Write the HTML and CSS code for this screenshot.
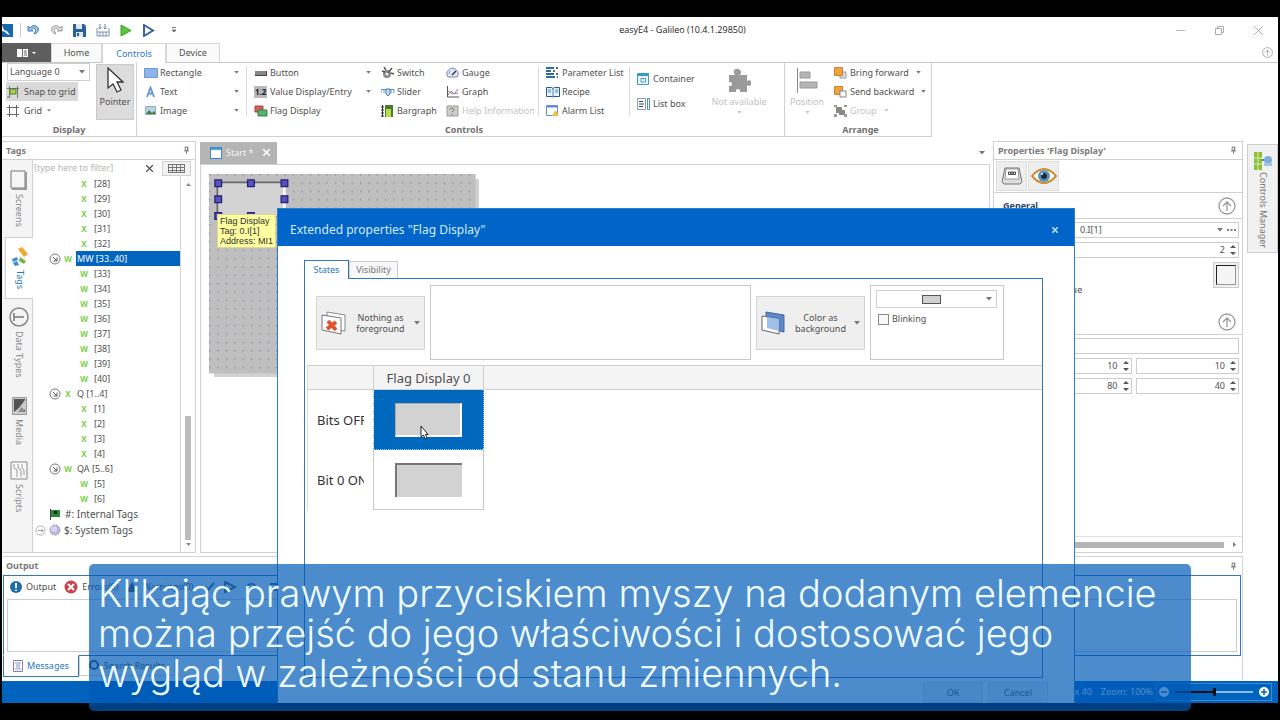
FILE: index.html
```html
<!DOCTYPE html>
<html lang="pl">
<head>
<meta charset="utf-8">
<title>easyE4 - Galileo (10.4.1.29850)</title>
<link rel="stylesheet" href="styles.css">
</head>
<body>
<svg class="defs" aria-hidden="true">
  <symbol id="pin" viewBox="0 0 8 10"><path d="M2.5 1v4h3V1M1 5.500h6M4 5.500V9M2 1h4M5 1v4" fill="none" stroke="#777"/></symbol>
  <symbol id="down" viewBox="0 0 6 4"><path d="M0 0h6L3 3.500z" fill="#777"/></symbol>
  <symbol id="spin" viewBox="0 0 6 12"><path d="M0 4h6L3 1zM0 8h6L3 11z" fill="#555"/></symbol>
  <symbol id="collapse" viewBox="0 0 18 18"><circle cx="9" cy="9" r="8" fill="none" stroke="#999" stroke-width="1.300"/><path d="M9 14V5M5 9l4-4 4 4" fill="none" stroke="#999" stroke-width="1.300"/></symbol>
  <symbol id="open" viewBox="0 0 12 12"><circle cx="6" cy="6" r="5" fill="none" stroke="#777"/><path d="M4 4l4 4M8 4.500V8H4.500" fill="none" stroke="#555"/></symbol>
  <symbol id="square" viewBox="0 0 12 12"><rect x=".5" y=".5" width="11" height="11" fill="#fff" stroke="#3b86cc"/><path d="M1 2h10" stroke="#49a0dd" stroke-width="2"/></symbol>
</svg>

<div class="app">
  <header class="titlebar">
    <div class="quick">
      <svg width="12" height="15" viewBox="0 0 12 15"><path d="M0 1h11v13H0z" fill="#1769ad"/><path d="M0 2l2 5 3 1 3 4-3-1-2-2-3-1z" fill="#fff"/></svg>
      <i class="vline"></i>
      <button aria-label="Undo"><svg width="13" height="12" viewBox="0 0 13 12"><path d="M1 2v5h5L4.500 5.500C7 3 10 5 8 8l-1 2c5-1 6-6 2-8C7 1 4 2 3 4z" fill="#9cc7ec" stroke="#3c7cbb"/></svg></button>
      <button aria-label="Redo"><svg width="13" height="12" viewBox="0 0 13 12"><path d="M12 2v5H7l1.500-1.500C6 3 3 5 5 8l1 2C1 9 0 4 4 2c2-1 5 0 6 2z" fill="#ddd" stroke="#999"/></svg></button>
      <button aria-label="Save"><svg width="13" height="13" viewBox="0 0 13 13"><path d="M0 0h11l2 2v11H0z" fill="#2a6099"/><path d="M3 0h6v5H3zM3 8h7v5H3z" fill="#dbe8f3"/><path d="M4 9h2v3H4z" fill="#2a6099"/></svg></button>
      <button aria-label="Build"><svg width="14" height="13" viewBox="0 0 14 13"><path d="M1 4v8h12V4M1 8h12M4 8v4M7 8v4M10 8v4" fill="none" stroke="#7c94b5"/><path d="M4 0v5M9 0v5M2.500 3.500L4 5l1.500-1.500M7.500 3.500L9 5l1.500-1.500" fill="none" stroke="#6684ac"/></svg></button>
      <button aria-label="Run"><svg width="12" height="13" viewBox="0 0 12 13"><path d="M1 1l10 5.500L1 12z" fill="#5cc43a" stroke="#43a32a"/></svg></button>
      <button aria-label="Simulate"><svg width="13" height="13" viewBox="0 0 13 13"><path d="M2 1l9 5.500L2 12z" fill="#fff" stroke="#3a62a3" stroke-width="2"/></svg></button>
      <button aria-label="More" class="more"><svg width="6" height="6" viewBox="0 0 6 6"><path d="M1 .5h4M1 3h4L3 5z" stroke="#777" fill="#777"/></svg></button>
    </div>
    <h1>easyE4 - Galileo (10.4.1.29850)</h1>
    <div class="winbtns">
      <button aria-label="Minimize"><svg width="9" height="9"><path d="M0 4.500h9" stroke="#bbb"/></svg></button>
      <button aria-label="Restore"><svg width="9" height="9"><path d="M.5 2.500h6v6h-6zM2.500 2.500v-2h6v6h-2" fill="none" stroke="#aaa"/></svg></button>
      <button aria-label="Close"><svg width="9" height="9"><path d="M0 0l9 9M9 0L0 9" stroke="#aaa"/></svg></button>
    </div>
  </header>

  <nav class="tabs">
    <button class="filetab" aria-label="File"><svg width="20" height="10" viewBox="0 0 20 10"><path d="M0 1h11v8H0z" fill="#fff"/><path d="M5.500 1v8M7 3h3M7 5h3M7 7h3" stroke="#666"/><path d="M15 4h4l-2 2z" fill="#fff"/></svg></button>
    <button class="t1">Home</button>
    <button class="t2 on">Controls</button>
    <button class="t3">Device</button>
    <button class="fold" aria-label="Collapse ribbon"><svg width="11" height="11"><use href="#collapse"/></svg></button>
  </nav>

  <section class="ribbon">
    <div class="group g-display">
      <div class="gbody">
        <div class="col c0">
          <div class="selbox"><select aria-label="Language"><option>Language 0</option></select><svg width="6" height="4"><use href="#down"/></svg></div>
          <button class="cmd pressed"><svg width="12" height="12" viewBox="0 0 12 12"><path d="M0 2.500h12M2.500 0v12M10.500 0v12M0 11h3" stroke="#777"/><path d="M3 3h6v5H3z" fill="#a8cf53" stroke="#567f2a"/></svg><span>Snap to grid</span></button>
          <button class="cmd"><svg width="12" height="12" viewBox="0 0 12 12"><path d="M0 2.500h12M0 9.500h12M2.500 0v12M9.500 0v12" stroke="#666"/></svg><span class="tight">Grid</span><svg class="dd" width="4" height="3"><use href="#down"/></svg></button>
        </div>
        <button class="pointer"><svg width="18" height="27" viewBox="0 0 18 27"><path d="M2 1v20l5-4 4 8 4-2-4-8h6z" fill="#fff" stroke="#333" stroke-width="1.300"/></svg>Pointer</button>
      </div>
      <h2>Display</h2>
    </div>
    <div class="group g-controls">
      <div class="gbody">
        <div class="col c1">
          <button class="cmd"><svg width="14" height="12" viewBox="0 0 14 12"><path d="M.5 1.500h13v9H.5z" fill="#8fb5e8" stroke="#6b98d5"/></svg><span>Rectangle</span><svg class="dd" width="5" height="3"><use href="#down"/></svg></button>
          <button class="cmd"><svg width="14" height="12" viewBox="0 0 14 12"><path d="M3 11L6.500 1.500 10 11M4 7.500h5" fill="none" stroke="#6798cf" stroke-width="1.800"/></svg><span>Text</span><svg class="dd" width="5" height="3"><use href="#down"/></svg></button>
          <button class="cmd"><svg width="14" height="12" viewBox="0 0 14 12"><path d="M1.500 1.500h10v8h-10z" fill="#b5d5ea" stroke="#9aa"/><path d="M2 9l3-4 3 3 2-2 2 3z" fill="#4a7a42"/></svg><span>Image</span><svg class="dd" width="5" height="3"><use href="#down"/></svg></button>
        </div>
        <i class="sep"></i>
        <div class="col c2">
          <button class="cmd"><svg width="14" height="12" viewBox="0 0 14 12"><path d="M1 4h11v5H1z" fill="#888"/><path d="M1 8.500h11M12.500 4v5" stroke="#444"/></svg><span>Button</span><svg class="dd" width="5" height="3"><use href="#down"/></svg></button>
          <button class="cmd"><svg width="14" height="12" viewBox="0 0 14 12"><path d="M0 0h13v12H0z" fill="#b8b8b8"/><text x="1" y="9" class="digits">1.2</text></svg><span>Value Display/Entry</span><svg class="dd" width="5" height="3"><use href="#down"/></svg></button>
          <button class="cmd"><svg width="14" height="12" viewBox="0 0 14 12"><path d="M1 1h8v6H1z" fill="#d3605a" stroke="#a44"/><path d="M4 5h9v6H4z" fill="#55b46b" stroke="#37824a"/></svg><span>Flag Display</span></button>
        </div>
        <div class="col c3">
          <button class="cmd"><svg width="14" height="12" viewBox="0 0 14 12"><circle cx="6" cy="7" r="4" fill="#888"/><path d="M6 7l5-6M1 4l3 1M3 0l2 3M10 6l3 1" stroke="#555" stroke-width="1.500"/><circle cx="6" cy="7" r="1.500" fill="#eee"/></svg><span>Switch</span></button>
          <button class="cmd"><svg width="14" height="12" viewBox="0 0 14 12"><path d="M0 3.500h13M0 3v4M3 3v4M10 3v4M13 3v4" stroke="#5d92c9" fill="none"/><path d="M5 3h4v5L7 10 5 8z" fill="#c4dbf1" stroke="#4b7fb7"/></svg><span>Slider</span></button>
          <button class="cmd"><svg width="14" height="12" viewBox="0 0 14 12"><path d="M1.500 0v12M0 2h3M0 5h3M0 8h3M0 11h3" stroke="#333"/><path d="M4 0h8v12H4z" fill="#477a36"/><path d="M5 4h5v8H5z" fill="#bddd3f"/></svg><span>Bargraph</span></button>
        </div>
        <div class="col c4">
          <button class="cmd"><svg width="14" height="12" viewBox="0 0 14 12"><path d="M2 10a5.500 5.500 0 1 1 9 0z" fill="#e3e7f4" stroke="#7582b1"/><path d="M6 8l4-4" stroke="#334" stroke-width="1.500"/><path d="M3 7l1-3" stroke="#779bd5"/></svg><span>Gauge</span></button>
          <button class="cmd"><svg width="14" height="12" viewBox="0 0 14 12"><path d="M1.500 0v11H13" fill="none" stroke="#556"/><path d="M2 9l3-4 3 3 4-5" fill="none" stroke="#d0607f"/><path d="M2 5l4 3 6-1" fill="none" stroke="#7c8fc5"/></svg><span>Graph</span></button>
          <button class="cmd" disabled><svg width="14" height="12" viewBox="0 0 14 12"><path d="M1 1h11v10H1z" fill="#ccc" stroke="#999"/><path d="M4 5c0-3 5-2 4 0L6 7M6 8.500V10" fill="none" stroke="#777"/></svg><span>Help Information</span></button>
        </div>
        <i class="sep"></i>
        <div class="col c5">
          <button class="cmd"><svg width="14" height="12" viewBox="0 0 14 12"><path d="M0 1h8M0 4h5M0 7h8M0 10h9" stroke="#2d6ca1" stroke-width="2"/><path d="M10 1h2M7 4h2M10 7h2M11 10h1" stroke="#333" stroke-width="1.500"/></svg><span>Parameter List</span></button>
          <button class="cmd"><svg width="14" height="12" viewBox="0 0 14 12"><path d="M.5 1.500h5l1.500 1 1.500-1h5v9H8L7 11l-1-.5H.5z" fill="#e6f1fa" stroke="#25598e"/><path d="M7 2v8M2 4h3M2 6h3M9 4h3M9 6h3" stroke="#4d86bc"/></svg><span>Recipe</span></button>
          <button class="cmd"><svg width="14" height="12" viewBox="0 0 14 12"><path d="M.5.5h11v10H.5z" fill="#fff" stroke="#5d93ca"/><path d="M1 1.500h10" stroke="#5d93ca" stroke-width="2"/><path d="M6 11c2-1 1-5 3.500-5s2 4 3.500 5z" fill="#f0bd45"/></svg><span>Alarm List</span></button>
        </div>
        <i class="sep"></i>
        <div class="col c6">
          <button class="cmd"><svg width="14" height="12" viewBox="0 0 14 12"><path d="M.5.500h11v11H.5z" fill="#eaf5fb" stroke="#3c9ac8"/><path d="M1 2h10" stroke="#3c9ac8" stroke-width="2"/><path d="M4 5.500h4.500v3.500H4z" fill="#fff" stroke="#3c9ac8"/></svg><span>Container</span></button>
          <button class="cmd"><svg width="14" height="12" viewBox="0 0 14 12"><path d="M.5.500h8v11h-8z" fill="#fff" stroke="#8a9db0"/><path d="M2 3.500h4M2 6h5M2 8.500h4" stroke="#345"/><path d="M10.500.500h2v11h-2z" fill="#fff" stroke="#4d90cc"/></svg><span>List box</span></button>
        </div>
        <button class="big na" disabled><svg width="24" height="26" viewBox="0 0 24 26"><path d="M2 8h6C5 4 8 1 11 2s4 3 2 6h7v6c3-2 5 0 4 3s-3 2-4 1v7h-7c1-4-5-4-4 0H2v-6c4 1 4-5 0-4z" fill="#9a9a9a"/></svg>Not available<svg width="5" height="3" opacity=".4"><use href="#down"/></svg></button>
      </div>
      <h2>Controls</h2>
    </div>
    <div class="group g-arrange">
      <div class="gbody">
        <button class="big pos" disabled><svg width="22" height="26" viewBox="0 0 22 26"><path d="M1.500 1v25" stroke="#888"/><path d="M4 5h10v6H4zM4 15h17v6H4z" fill="#b5b5b5" stroke="#999"/></svg>Position<svg width="5" height="3" opacity=".4"><use href="#down"/></svg></button>
        <div class="col c7">
          <button class="cmd"><svg width="14" height="12" viewBox="0 0 14 12"><path d="M6 5h6v6H6z" fill="#ddd" stroke="#999"/><path d="M.5.500h8v8h-8z" fill="#f0a23d" stroke="#cc8131"/></svg><span class="mid">Bring forward</span><svg width="5" height="3"><use href="#down"/></svg></button>
          <button class="cmd"><svg width="14" height="12" viewBox="0 0 14 12"><path d="M.5.500h8v8h-8z" fill="#f0a23d" stroke="#cc8131"/><path d="M6 5h6v6H6z" fill="#fff" stroke="#789"/></svg><span class="mid">Send backward</span><svg width="5" height="3"><use href="#down"/></svg></button>
          <button class="cmd" disabled><svg width="14" height="12" viewBox="0 0 14 12"><path d="M2 2h6v6H2zM5 5h6v5H5z" fill="#888"/><path d="M0 0h3v2H0zM10 0h3v2h-3zM0 9h3v3H0zM10 9h3v3h-3z" fill="#999"/></svg><span class="tight">Group</span><svg width="5" height="3" opacity=".4"><use href="#down"/></svg></button>
        </div>
      </div>
      <h2>Arrange</h2>
    </div>
  </section>

  <main class="work">
    <aside class="tagspanel">
      <div class="phead"><span>Tags</span><svg width="7" height="9"><use href="#pin"/></svg></div>
      <div class="tagsbody">
        <nav class="side">
          <button class="s1"><svg width="18" height="20" viewBox="0 0 18 20"><path d="M1 1h14v17H1z" fill="#f6f6f6" stroke="#777"/><path d="M16 2v17H2" fill="none" stroke="#999" stroke-width="2"/></svg><span>Screens</span></button>
          <button class="s2 on"><svg width="18" height="20" viewBox="0 0 18 20"><path d="M7 3l4-2 6 7-4 3z" fill="#f2a72f"/><path d="M9 11l6 4-2 3-5-3z" fill="#6ebb4b"/><path d="M1 13l5-2 1 3-5 2z" fill="#3e8fcf"/><path d="M2 17l4-2 2 4-4 1z" fill="#3e8fcf"/></svg><span>Tags</span></button>
          <button class="s3"><svg width="20" height="20" viewBox="0 0 20 20"><circle cx="10" cy="10" r="9" fill="none" stroke="#888" stroke-width="1.500"/><path d="M5 6v8M5 10h10" stroke="#777" stroke-width="1.500"/></svg><span>Data Types</span></button>
          <button class="s4"><svg width="15" height="18" viewBox="0 0 15 18"><path d="M.5.500h14v17H.5z" fill="#ccc" stroke="#999"/><path d="M2 2h11v13H2z" fill="#555"/><path d="M2 15l5-4 6-8v9l-3 3z" fill="#ccc"/><path d="M6 15l4-5 3 5z" fill="#888"/></svg><span>Media</span></button>
          <button class="s5"><svg width="18" height="19" viewBox="0 0 18 19"><path d="M1 1h16v17H1z" fill="#f8f8f8" stroke="#888"/><path d="M4 3v4l3 2v7M8 3v4l3 2v7M12 3v4l2 2v5" fill="none" stroke="#999"/></svg><span>Scripts</span></button>
        </nav>
        <div class="treewrap">
          <div class="filter"><input type="text" aria-label="Filter" placeholder="[type here to filter]"><button aria-label="Clear"><svg width="7" height="7"><path d="M0 0l7 7M7 0L0 7" stroke="#555" stroke-width="1.300"/></svg></button><button class="gridbtn" aria-label="Columns"><svg width="17" height="9"><path d="M0 .5h17M0 3.500h17M0 6.500h17M0 8.500h17M.5 0v9M4.500 0v9M8.500 0v9M12.500 0v9M16.500 0v9" stroke="#777"/></svg></button></div>
          <div class="treearea">
            <ul class="tree">
              <li class="leaf"><b>X</b>[28]</li>
              <li class="leaf"><b>X</b>[29]</li>
              <li class="leaf"><b>X</b>[30]</li>
              <li class="leaf"><b>X</b>[31]</li>
              <li class="leaf"><b>X</b>[32]</li>
              <li class="node sel"><svg width="12" height="12"><use href="#open"/></svg><b>W</b><span>MW [33..40]</span></li>
              <li class="leaf"><b>W</b>[33]</li>
              <li class="leaf"><b>W</b>[34]</li>
              <li class="leaf"><b>W</b>[35]</li>
              <li class="leaf"><b>W</b>[36]</li>
              <li class="leaf"><b>W</b>[37]</li>
              <li class="leaf"><b>W</b>[38]</li>
              <li class="leaf"><b>W</b>[39]</li>
              <li class="leaf"><b>W</b>[40]</li>
              <li class="node"><svg width="12" height="12"><use href="#open"/></svg><b>X</b><span>Q [1..4]</span></li>
              <li class="leaf"><b>X</b>[1]</li>
              <li class="leaf"><b>X</b>[2]</li>
              <li class="leaf"><b>X</b>[3]</li>
              <li class="leaf"><b>X</b>[4]</li>
              <li class="node"><svg width="12" height="12"><use href="#open"/></svg><b>W</b><span>QA [5..6]</span></li>
              <li class="leaf"><b>W</b>[5]</li>
              <li class="leaf"><b>W</b>[6]</li>
              <li class="root int"><svg width="12" height="11" viewBox="0 0 12 11"><path d="M1.500 0v11" stroke="#444"/><path d="M2 1h9v7H2z" fill="#268a35"/><path d="M5 2h3v3H5z" fill="#123"/></svg>#: Internal Tags</li>
              <li class="root sys"><svg width="11" height="11" viewBox="0 0 12 12"><circle cx="6" cy="6" r="5" fill="none" stroke="#aaa"/><path d="M3 6h6M7 4l2 2-2 2" fill="none" stroke="#999"/></svg><svg width="12" height="12" viewBox="0 0 12 12"><circle cx="6" cy="6" r="5" fill="#b9b8d8" stroke="#8e8bb0" stroke-dasharray="2 1"/><circle cx="5" cy="5" r="3" fill="#d6d5ea"/></svg>$: System Tags</li>
            </ul>
            <div class="vscroll"><svg width="5" height="3"><path d="M0 3h5L2.500 0z" fill="#888"/></svg><i></i><svg width="5" height="3"><path d="M0 0h5L2.500 3z" fill="#888"/></svg></div>
          </div>
        </div>
      </div>
    </aside>

    <section class="editor">
      <div class="doctabs"><button class="doctab"><svg width="12" height="12"><use href="#square"/></svg><span>Start *</span><svg width="7" height="7"><path d="M0 0l7 7M7 0L0 7" stroke="#fff" stroke-width="1.500"/></svg></button><svg class="ddoc" width="6" height="4"><use href="#down"/></svg></div>
      <div class="surface">
        <svg class="screen" width="270" height="203" viewBox="0 0 322 242">
          <defs><pattern id="dots" width="10" height="10" patternUnits="userSpaceOnUse"><rect x="0" y="0" width="1.500" height="1.500" fill="#8080a0"/></pattern></defs>
          <path d="M6 6h316v236H6z" fill="#d2d2d2"/>
          <path d="M0 0h318v238H0z" fill="#bfbfc0"/><path d="M0 0h318v238H0z" fill="url(#dots)"/>
          <path d="M10 10h80v40H10z" fill="#d3d3d3"/><path d="M10 50V10h80" fill="none" stroke="#666" stroke-width="2"/><path d="M90 10v40" stroke="#fff" stroke-width="3"/>
          <path d="M7 7h8v8H7zM46 7h8v8h-8zM86 7h8v8h-8zM7 26h8v8H7zM86 26h8v8h-8zM7 46h8v8H7zM46 46h8v8h-8z" fill="#5b51b8" stroke="#22207a" stroke-width="1.500"/>
        </svg>
        <div class="tip">Flag Display<br>Tag: 0.I[1]<br>Address: MI1</div>
      </div>
    </section>

    <aside class="props">
      <div class="phead"><span>Properties 'Flag Display'</span><svg width="7" height="9"><use href="#pin"/></svg></div>
      <div class="ptools">
        <button aria-label="General"><svg width="22" height="18" viewBox="0 0 22 18"><path d="M4 1h14l3 14-2 2H3l-2-2z" fill="#ddd" stroke="#777"/><path d="M5 2h12l1 10H4z" fill="#fff" stroke="#999"/><path d="M7.500 5h2v2.500h-2zM10 5h2v2.500h-2zM12.500 5h2v2.500h-2z" fill="none" stroke="#444"/></svg></button>
        <button aria-label="Appearance"><svg width="26" height="18" viewBox="0 0 26 18"><path d="M1 9Q13-5 25 9 13 23 1 9z" fill="#fff" stroke="#c98f35" stroke-width="2"/><circle cx="13" cy="9" r="6" fill="#5d92b5"/><circle cx="13" cy="9" r="3" fill="#162b3c"/><circle cx="11" cy="7" r="1" fill="#fff"/></svg></button>
      </div>
      <div class="psec"><h3>General</h3><svg width="18" height="18"><use href="#collapse"/></svg></div>
      <div class="pform">
        <div class="field tag"><input aria-label="Tag" value="0.I[1]"><svg width="6" height="4"><use href="#down"/></svg><svg width="9" height="2"><path d="M0 1h2M3.500 1h2M7 1h2" stroke="#555" stroke-width="1.500"/></svg></div>
        <div class="field num"><input aria-label="Count" value="2"><svg width="6" height="12"><use href="#spin"/></svg></div>
        <div class="prow"><span class="plabel">Value</span><button class="look" aria-label="Style"><i></i></button></div>
      </div>
      <div class="psec"><h3>Layout</h3><svg width="18" height="18"><use href="#collapse"/></svg></div>
      <div class="pform">
        <div class="field"><input aria-label="Name"></div>
        <div class="pair"><div class="field num"><input aria-label="X" value="10"><svg width="6" height="12"><use href="#spin"/></svg></div><div class="field num"><input aria-label="Y" value="10"><svg width="6" height="12"><use href="#spin"/></svg></div></div>
        <div class="pair"><div class="field num"><input aria-label="Width" value="80"><svg width="6" height="12"><use href="#spin"/></svg></div><div class="field num"><input aria-label="Height" value="40"><svg width="6" height="12"><use href="#spin"/></svg></div></div>
      </div>
      <div class="hscroll"><i></i><svg width="3" height="5"><path d="M0 0v5l3-2.500z" fill="#777"/></svg></div>
    </aside>

    <nav class="rightstrip"><button><svg width="18" height="20" viewBox="0 0 18 20"><path d="M0 1h8v18H0z" fill="#8bbf3c"/><path d="M4 1v18M0 7h8M0 13h8" stroke="#dcebbf"/><path d="M8 9h3" stroke="#777" stroke-width="2"/><circle cx="14" cy="9" r="4" fill="#7faedb"/><path d="M10 12h8v3h-8z" fill="#a8c5e2"/></svg><span>Controls Manager</span></button></nav>
  </main>

  <section class="output">
    <div class="phead"><span>Output</span><svg width="7" height="9"><use href="#pin"/></svg></div>
    <div class="outbox">
      <div class="outtools">
        <button><svg width="12" height="12" viewBox="0 0 12 12"><circle cx="6" cy="6" r="6" fill="#1b6fae"/><path d="M6 2v5M6 8.500V10" stroke="#fff" stroke-width="2"/></svg>Output</button>
        <button><svg width="14" height="14" viewBox="0 0 14 14"><circle cx="7" cy="7" r="6.500" fill="#c8414b"/><path d="M4 4l6 6M10 4l-6 6" stroke="#fff" stroke-width="2"/></svg>Errors(0)</button>
        <button><svg width="12" height="12" viewBox="0 0 12 12"><path d="M6 1l6 10H0z" fill="#555"/></svg>Warnings(0)</button>
        <svg width="80" height="12" viewBox="0 0 80 12"><path d="M4 6l3 3 6-7M24 1l10 5-10 5zM46 9c0-8 8-8 9-1M69 3h9M69 9h9" fill="none" stroke="#467" stroke-width="2"/></svg>
      </div>
      <textarea aria-label="Messages"></textarea>
    </div>
    <div class="outtabs"><button class="on"><svg width="10" height="12" viewBox="0 0 10 12"><path d="M.5.500h9v11h-9z" fill="#fff" stroke="#7d82bd"/><path d="M2 3h6M3 5h4M3 7h4M2 9h6" stroke="#8d91c6"/></svg>Messages</button><button><svg width="11" height="11" viewBox="0 0 11 11"><circle cx="5" cy="5" r="4" fill="none" stroke="#444" stroke-width="2"/></svg>Search Results</button></div>
  </section>

  <footer class="status"><span>80 x 40</span><label for="zoom">Zoom: 100%</label><div class="zoombox"><button aria-label="Zoom out"><svg width="10" height="10"><circle cx="5" cy="5" r="5" fill="#fff"/><path d="M2 5h6" stroke="#0063be" stroke-width="1.500"/></svg></button><input id="zoom" type="range" min="0" max="100" value="50"><button aria-label="Zoom in"><svg width="10" height="10"><circle cx="5" cy="5" r="5" fill="#fff"/><path d="M2 5h6M5 2v6" stroke="#0063be" stroke-width="1.500"/></svg></button></div></footer>
</div>

<div class="dialog" role="dialog" aria-label="Extended properties">
  <div class="dhead"><h2>Extended properties "Flag Display"</h2><button aria-label="Close"><svg width="6" height="6"><path d="M0 0l6 6M6 0L0 6" stroke="#bfe2ff" stroke-width="1.500"/></svg></button></div>
  <div class="dbody">
    <div class="dtabs"><button class="on">States</button><button>Visibility</button></div>
    <div class="dpanel">
      <div class="dtools">
        <button class="kind"><svg width="26" height="24" viewBox="0 0 26 24"><path d="M6 1l18 3v16l-18-3z" fill="#fff" stroke="#888"/><path d="M1 4l19 3v16L1 19z" fill="#fff" stroke="#777"/><path d="M7 10l8 9M15 11l-9 7" stroke="#e0512f" stroke-width="4"/></svg><span>Nothing as foreground</span><svg width="6" height="4"><use href="#down"/></svg></button>
        <div class="blank"></div>
        <button class="kind"><svg width="26" height="24" viewBox="0 0 26 24"><path d="M5 1l18 3v17L5 17z" fill="#5b88c9" stroke="#46699e"/><path d="M1 5l17 3v15L1 19z" fill="#fff" stroke="#667"/><path d="M6 6l12 2v12L6 17z" fill="#9dbfe9"/></svg><span>Color as background</span><svg width="6" height="4"><use href="#down"/></svg></button>
        <div class="colorbox"><div class="selbox"><select aria-label="Color"><option></option></select><i class="swatch"></i><svg width="6" height="4"><use href="#down"/></svg></div><label><input type="checkbox">Blinking</label></div>
      </div>
      <table class="states">
        <thead><tr><th class="rowh"></th><th class="flag">Flag Display 0</th><th></th></tr></thead>
        <tbody>
          <tr><th class="rowh"><div>Bits OFF</div></th><td class="cell on"><i></i></td><td></td></tr>
          <tr><th class="rowh"><div>Bit 0 ON</div></th><td class="cell"><i></i></td><td></td></tr>
        </tbody>
      </table>
    </div>
    <div class="dfoot"><button>OK</button><button>Cancel</button></div>
  </div>
  <svg class="cursor" width="9" height="15" viewBox="0 0 9 15"><path d="M1 1v11l2.500-2L5 14l2-1-1.500-3.500H8z" fill="#fff" stroke="#222"/></svg>
</div>

<p class="caption">Klikając prawym przyciskiem myszy na dodanym elemencie można przejść do jego właściwości i dostosować jego wygląd w zależności od stanu zmiennych.</p>
</body>
</html>
```
FILE: styles.css
```css
* { box-sizing: border-box; }
body { margin: 0; padding: 17px 2px; min-height: 100vh; position: relative; display: flex; flex-direction: column; background: #000; color: #505050; font: 9px/12px "Noto Sans", "Open Sans", sans-serif; overflow-x: hidden; }
button, input, select, textarea { font: inherit; color: inherit; margin: 0; padding: 0; border: 0; background: none; border-radius: 0; }
select { appearance: none; }
button { white-space: nowrap; }
h1, h2, h3, p, ul { margin: 0; padding: 0; font-weight: normal; }
svg { flex: none; display: block; }
.defs { position: absolute; width: 0; height: 0; }
.app { flex: 1; display: flex; flex-direction: column; background: #fff; min-width: 0; }

.titlebar { display: grid; grid-template-columns: auto 1fr auto; align-items: center; height: 26px; padding-right: 15px; }
.titlebar h1 { font-family: "Open Sans", sans-serif; font-size: 9px; color: #222; text-align: center; padding-left: 12px; }
.quick { display: flex; align-items: center; gap: 10px; }
.quick .vline { width: 1px; height: 14px; background: #ccc; margin: 0 -4px 0 -4px; }
.quick .more { margin-left: 6px; }
.winbtns { display: flex; justify-content: flex-end; gap: 30px; }

.tabs { display: flex; height: 20px; border-bottom: 1px solid #c8c8c8; padding-right: 5px; }
.tabs button { height: 19px; }
.tabs .filetab { width: 49px; background: #5e5e5e; display: grid; place-items: center; }
.t1, .t2, .t3 { border: 1px solid #d6d6d6; border-bottom: 0; background: #fafafa; }
.tabs .t1 { width: 51px; }
.tabs .t2 { width: 64px; height: 20px; background: #fff; color: #2a79c4; }
.tabs .t3 { width: 54px; }
.tabs .fold { margin-left: auto; }

.ribbon { display: flex; }
.group { border: 1px solid #d0d0d0; border-width: 0 1px 1px 0; height: 74px; display: flex; flex-direction: column; justify-content: space-between; }
.group h2 { text-align: center; font-size: 9px; font-weight: bold; color: #707070; line-height: 12px; }
.gbody { display: flex; height: 58px; }
.g-display { width: 135px; }
.g-controls { width: 648px; padding-left: 7px; }
.g-arrange { width: 147px; padding-left: 5px; }
.col { display: flex; flex-direction: column; flex: none; }
.cmd { display: flex; align-items: center; height: 19px; gap: 2px; text-align: left; }
.cmd span { flex: 1; }
.cmd span.tight, .cmd span.mid { flex: none; margin-right: 5px; }
.cmd:disabled, .big:disabled { color: #c2c2c2; }
.col.c0 { width: 88px; padding-left: 5px; }
.col.c0 .cmd { gap: 5px; }
.col.c0 .cmd.pressed { width: 72px; background: #dadada; margin-left: -1px; padding-left: 1px; }
.col.c0 .tight { margin: 0; }
.selbox { position: relative; border: 1px solid #cfcfcf; background: #fff; display: flex; align-items: center; height: 18px; margin-bottom: 1px; }
.selbox select { width: 100%; height: 100%; padding-left: 2px; }
.selbox svg { position: absolute; right: 4px; pointer-events: none; }
.pointer { margin: 1px 0 0 6px; width: 38px; height: 56px; background: #dcdcdc; border: 1px solid #cacaca; display: flex; flex-direction: column; align-items: center; gap: 2px; padding-top: 2px; }
.sep { width: 1px; height: 50px; margin-top: 3px; background: #dcdcdc; }
.c1 { width: 95px; margin-right: 7px; }
.c2 { width: 117px; margin: 0 10px 0 7px; }
.c3 { width: 65px; }
.c4 { width: 92px; }
.c5 { width: 90px; padding-left: 7px; }
.c6 { width: 73px; padding: 6px 0 0 7px; gap: 6px; }
.big { display: flex; flex-direction: column; align-items: center; gap: 3px; height: 54px; padding-top: 4px; }
.na { width: 72px; }
.pos { width: 34px; margin-right: 10px; }
.digits { font: bold 8px "Noto Sans", sans-serif; fill: #222; }

.work { display: flex; flex: 1; padding-top: 4px; min-height: 410px; }
.phead { display: flex; justify-content: space-between; align-items: center; height: 18px; padding: 0 5px 0 4px; font-weight: bold; color: #7a7a7a; border-bottom: 1px solid #d0d0d0; }
.tagspanel { width: 194px; margin-right: 4px; border: 1px solid #d0d0d0; border-left: 0; display: flex; flex-direction: column; }
.tagsbody { display: flex; flex: 1; }
.side { width: 31px; background: #f4f4f4; border-right: 1px solid #d0d0d0; display: flex; flex-direction: column; }
.side button { display: flex; flex-direction: column; align-items: center; gap: 4px; margin-left: 3px; width: 28px; padding-top: 10px; color: #888; }
.side span, .rightstrip span { writing-mode: vertical-rl; }
.side .s1 { height: 77px; }
.side .s2 { height: 62px; background: #fff; border: 1px solid #d0d0d0; border-right: 0; color: #2577bd; padding-top: 8px; }
.side .s3 { height: 88px; padding-top: 8px; }
.side .s4 { height: 64px; }
.treewrap { flex: 1; display: flex; flex-direction: column; min-width: 0; }
.filter { display: flex; align-items: center; height: 16px; }
.filter input { width: 113px; padding-left: 1px; }
.filter input::placeholder { color: #b5b5b5; }
.filter .gridbtn { margin-left: 9px; border: 1px solid #d0d0d0; background: #f2f2f2; width: 29px; height: 15px; display: grid; place-items: center; }
.treearea { display: flex; flex: 1; }
.tree { flex: 1; list-style: none; border-right: 1px solid #d5d5d5; }
.tree li { display: flex; align-items: center; height: 15px; }
.tree b { color: #79cf47; width: 14px; text-align: center; font-size: 8px; }
.leaf { padding-left: 44px; gap: 3px; }
.node { padding-left: 16px; }
.node b { margin: 0 1px 0 0; }
.node span { flex: 1; line-height: 15px; padding-left: 1px; }
.node.sel span { background: #0066bd; color: #fff; }
.tree .root { height: 16px; font-size: 10px; }
.root.int { padding-left: 16px; gap: 4px; }
.root.sys { padding-left: 2px; gap: 3px; }
.vscroll { width: 14px; display: flex; flex-direction: column; align-items: center; justify-content: space-between; padding: 7px 0 6px; }
.vscroll i { width: 6px; height: 124px; background: #bcbcbc; margin: 226px 0 0; }

.editor { flex: 1; display: flex; flex-direction: column; min-width: 0; }
.doctabs { display: flex; align-items: center; height: 23px; padding-right: 5px; }
.doctab { width: 77px; height: 22px; background: #b5b5b5; color: #f4f4f4; display: flex; align-items: center; gap: 4px; padding: 0 7px 0 10px; }
.doctab span { flex: 1; text-align: left; }
.ddoc { margin-left: auto; }
.surface { flex: 1; position: relative; border: 1px solid #d0d0d0; padding: 9px 8px; }
.tip { position: absolute; left: 16px; top: 49px; padding: 1px 2px; background: #ffffa0; color: #333; font: 9px/10px "Liberation Sans", sans-serif; border: 1px solid #d8d89a; white-space: nowrap; }

.props { width: 250px; margin: 0 4px 0 3px; border: 1px solid #d0d0d0; display: flex; flex-direction: column; }
.ptools { display: flex; gap: 1px; height: 33px; padding: 1px 2px; border-bottom: 1px solid #d0d0d0; }
.ptools button { width: 31px; height: 30px; background: #eee; border: 1px solid #ddd; display: grid; place-items: center; }
.psec { display: flex; align-items: center; justify-content: space-between; height: 26px; padding: 0 6px 0 9px; border-bottom: 1px solid #d0d0d0; }
.psec h3 { font-weight: bold; color: #27476e; font-size: 9px; }
.pform { display: flex; flex-direction: column; gap: 4px; padding: 3px 3px 0 50px; }
.field { flex: 1; min-height: 16px; border: 1px solid #cdcdcd; display: flex; align-items: center; gap: 4px; padding-right: 2px; }
.field input { flex: 1; min-width: 0; width: 100%; }
.num input { text-align: right; padding-right: 1px; }
.tag input { padding-left: 35px; }
.prow { display: flex; justify-content: space-between; height: 47px; }
.plabel { padding: 22px 0 0 15px; }
.look { width: 26px; height: 26px; background: #f0f0f0; border: 1px solid #ccc; display: grid; place-items: center; }
.look i { width: 20px; height: 20px; border: 1px solid #999; border-top-color: #222; border-left-color: #222; background: #f4f4f4; }
.pair { display: grid; grid-template-columns: 1fr 1fr; gap: 4px; margin-left: -16px; }
.hscroll { margin-top: auto; height: 16px; display: flex; align-items: center; gap: 9px; padding: 0 6px 0 3px; border-top: 1px solid #ddd; }
.hscroll i { flex: 1; height: 6px; background: #b5b5b5; }
.rightstrip { width: 31px; padding-top: 3px; }
.rightstrip button { width: 31px; height: 109px; border: 1px solid #ccc; background: #f1f1f1; display: flex; flex-direction: column; align-items: center; padding-top: 6px; gap: 1px; color: #777; }

.output { margin: 3px 35px 0 0; border: 1px solid #d5d5d5; border-width: 1px 1px 0 0; }
.output .phead { border: 0; }
.outbox { margin: 0 1px; border: 1px solid #3377b8; padding: 0 3px 3px; }
.outtools { display: flex; align-items: center; gap: 8px; height: 21px; margin-bottom: 2px; padding-left: 3px; }
.outtools button { display: flex; align-items: center; gap: 4px; }
.outbox textarea { display: block; width: 100%; height: 53px; border: 1px solid #ccc; resize: none; }
.outtabs { display: flex; height: 25px; }
.outtabs button { display: flex; align-items: center; gap: 4px; height: 20px; padding: 0 9px; border: 1px solid #d0d0d0; border-top: 0; }
.outtabs .on { margin: -1px 0 0 1px; height: 22px; border: 1px solid #3377b8; border-top: 1px solid #fff; background: #fff; color: #2577bd; }
.status { background: #0063be; color: #fff; height: 22px; display: flex; align-items: center; justify-content: flex-end; gap: 9px; padding-right: 6px; }
.zoombox { display: flex; align-items: center; gap: 6px; height: 18px; border: 1px solid #3f8ad0; padding: 0 2px; margin-left: -6px; }
.zoombox input { appearance: none; width: 78px; height: 8px; }
.zoombox input::-webkit-slider-runnable-track { height: 2px; background: linear-gradient(90deg, #111 50%, #8ab9e6 50%); }
.zoombox input::-webkit-slider-thumb { appearance: none; width: 3px; height: 8px; margin-top: -3px; background: #111; }

.dialog { position: absolute; left: 277px; right: 205px; top: 208px; bottom: 17px; background: #fff; border: 1px solid #2a7cc4; border-bottom: 0; display: flex; flex-direction: column; overflow: hidden; }
.dhead { height: 37px; background: #0064c8; color: #d3ecff; display: flex; align-items: center; justify-content: space-between; padding: 4px 16px 0 12px; }
.dhead h2 { font-size: 12px; line-height: 18px; }
.dbody { flex: 1; display: flex; flex-direction: column; padding: 14px 26px 0; }
.dtabs { display: flex; align-items: flex-end; height: 18px; }
.dtabs button { width: 49px; height: 17px; border: 1px solid #ccc; border-bottom: 0; background: #f8f8f8; color: #777; }
.dtabs .on { width: 45px; height: 19px; margin-bottom: -1px; border-color: #3377b8; background: #fff; color: #2577bd; z-index: 1; }
.dpanel { flex: 1; border: 1px solid #3377b8; margin-right: 5px; padding-left: 2px; }
.dtools { display: flex; align-items: center; gap: 5px; padding: 6px 38px 5px 9px; }
.kind { width: 109px; height: 54px; background: #efefef; border: 1px solid #d5d5d5; display: flex; align-items: center; justify-content: space-between; padding: 0 4px; line-height: 11px; }
.kind span { width: 60px; white-space: normal; }
.blank { flex: 1; height: 75px; border: 1px solid #c8c8c8; }
.colorbox { width: 134px; height: 75px; border: 1px solid #c8c8c8; padding: 4px 6px 0 5px; display: flex; flex-direction: column; gap: 4px; }
.swatch { position: absolute; left: 45px; width: 19px; height: 9px; border: 1px solid #555; background: #d0d0d0; pointer-events: none; }
.colorbox label { display: flex; align-items: center; gap: 3px; padding-left: 2px; }
.colorbox input { appearance: none; width: 11px; height: 11px; border: 1px solid #888; background: #f8f8f8; }
.states { width: 100%; border-collapse: collapse; font-size: 13px; line-height: 18px; table-layout: fixed; }
.states th { font-weight: normal; padding: 0; text-align: left; }
.states thead th { height: 24px; background: #f4f4f4; border: 1px solid #d0d0d0; border-width: 1px 0; }
.states .rowh { width: 66px; border-left: 1px solid #ddd; }
.states thead .flag { width: 110px; border: 1px solid #d0d0d0; text-align: center; }
.rowh div { width: 47px; margin-left: 9px; overflow: hidden; white-space: nowrap; color: #333; }
.states td { height: 60px; padding: 0; }
.states .cell { border: 1px solid #c8c8c8; border-top: 0; }
.cell i { display: block; width: 67px; height: 34px; margin: 0 auto; background: #d2d2d2; border: 2px solid #777; border-width: 2px 0 0 2px; }
.states .cell.on { background: #0068bd; border: 1px dotted #9cc8ee; border-top: 1px solid #2f80c8; }
.cell.on i { border-width: 1px 2px 2px 1px; border-color: #aaa #fff #fff #aaa; }
.dfoot { display: flex; justify-content: flex-end; gap: 5px; height: 25px; padding-top: 4px; }
.dfoot button { width: 60px; height: 21px; border: 1px solid #ddd; background: #f0f0f0; }
.cursor { position: absolute; left: 142px; top: 216px; }

.caption { position: absolute; left: 89px; right: 89px; bottom: 9px; min-height: 147px; padding: 9px; border-radius: 5px; background: rgba(0, 90, 182, .7); color: #effcff; font: 300 38px/40px Inter, sans-serif; }
```
